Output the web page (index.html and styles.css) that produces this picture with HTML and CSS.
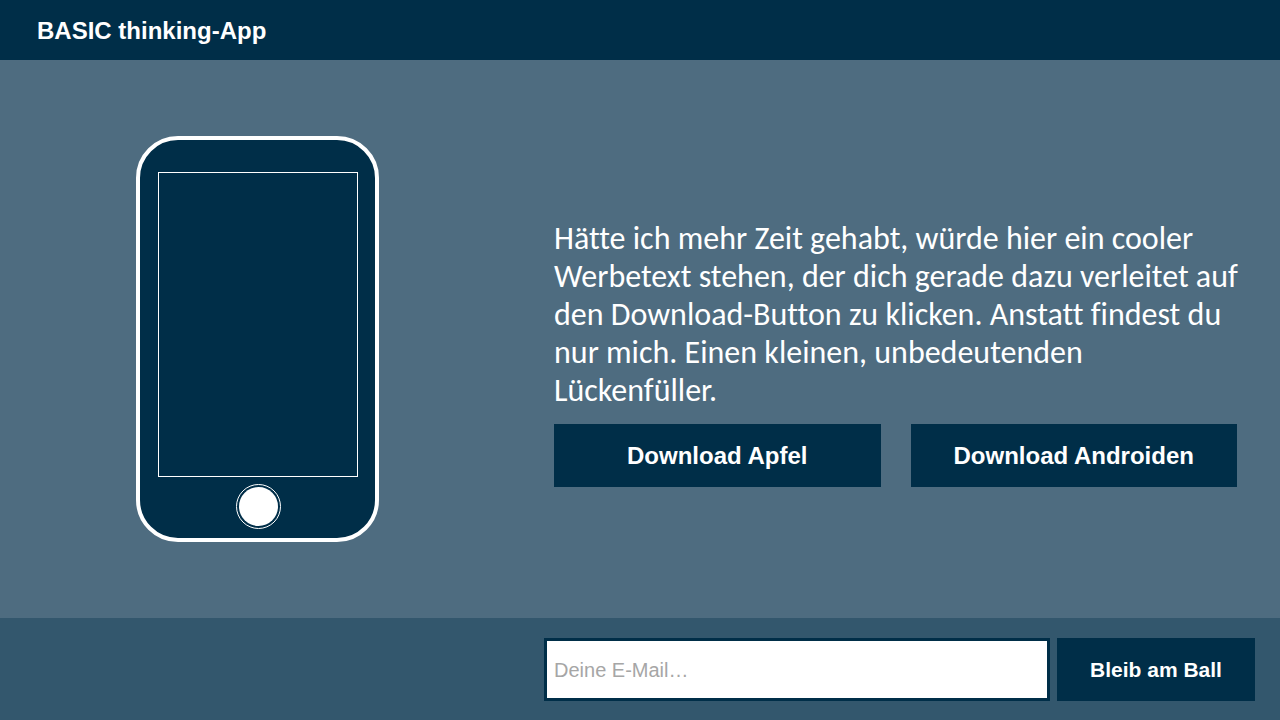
FILE: index.html
```
<!DOCTYPE html>
<html lang="de">
<head>
    <meta charset="UTF-8">
    <meta name="viewport" content="width=device-width, initial-scale=1.0">
    <title>BASIC thinking-App</title>
    <link rel="stylesheet" href="styles.css">
</head>
<body>
    <header class="header">
        <h1 class="title">BASIC thinking-App</h1>
    </header>

    <main class="main">
        <div class="phone-container">
            <div class="phone">
                <div class="phone-screen"></div>
                <div class="phone-home"></div>
            </div>
        </div>

        <div class="promo">
            <p class="promo-text">Hätte ich mehr Zeit gehabt, würde hier ein cooler Werbetext stehen, der dich gerade dazu verleitet auf den Download-Button zu klicken. Anstatt findest du nur mich. Einen kleinen, unbedeutenden Lückenfüller.</p>
            <div class="downloads">
                <button type="button" class="button">Download Apfel</button>
                <button type="button" class="button">Download Androiden</button>
            </div>
        </div>
    </main>

    <footer class="footer">
        <form class="newsletter">
            <input type="email" class="email" placeholder="Deine E-Mail…" aria-label="Deine E-Mail">
            <button type="submit" class="button button-submit">Bleib am Ball</button>
        </form>
    </footer>
</body>
</html>
```
FILE: styles.css
```
* {
    box-sizing: border-box;
}

body {
    margin: 0;
    min-height: 100vh;
    display: flex;
    flex-direction: column;
    background-color: #4e6c80;
    color: #fff;
    font-family: Arial, "Liberation Sans", sans-serif;
}

/* Header */
.header {
    padding: 17px 37px 15px;
    background-color: #002e48;
}

.title {
    margin: 0;
    font-size: 24px;
    line-height: 28px;
}

/* Phone on the left, text on the right */
.main {
    flex: 1;
    display: grid;
    grid-template-columns: 243px 1fr;
    column-gap: 175px;
    align-items: center;
    padding: 24px 35px 24px 136px;
}

.phone {
    display: flex;
    flex-direction: column;
    align-items: center;
    gap: 7px;
    padding: 32px 17px 9px 18px;
    border: 4px solid #fff;
    border-radius: 42px;
    background-color: #002e48;
}

.phone-screen {
    width: 100%;
    height: 305px;
    border: 1px solid #fff;
}

.phone-home {
    width: 45px;
    height: 45px;
    padding: 2px;
    border: 1px solid #fff;
    border-radius: 50%;
    background-color: #fff;
    background-clip: content-box;
}

.promo {
    padding-top: 28px;
}

.promo-text {
    margin: 0 0 14px;
    font-family: Calibri, Carlito, Lato, sans-serif;
    font-size: 32px;
    line-height: 38px;
    font-variant-ligatures: none;
}

.downloads {
    display: grid;
    grid-template-columns: 1fr 1fr;
    gap: 30px;
    padding-right: 8px;
}

.button {
    height: 63px;
    padding: 2px 0 0;
    border: 0;
    background-color: #002e48;
    color: #fff;
    font-family: inherit;
    font-size: 24px;
    font-weight: bold;
    cursor: pointer;
}

/* Newsletter */
.footer {
    padding: 20px 25px 19px 544px;
    background-color: #33576d;
}

.newsletter {
    display: flex;
    gap: 7px;
}

.email {
    flex: 1;
    min-width: 0;
    height: 63px;
    padding: 2px 7px 0;
    border: 3px solid #002e48;
    background-color: #fff;
    color: #002e48;
    font-family: inherit;
    font-size: 20px;
}

.email::placeholder {
    color: #a6a6a6;
}

.button-submit {
    width: 198px;
    padding: 0;
    font-size: 21px;
}
```
